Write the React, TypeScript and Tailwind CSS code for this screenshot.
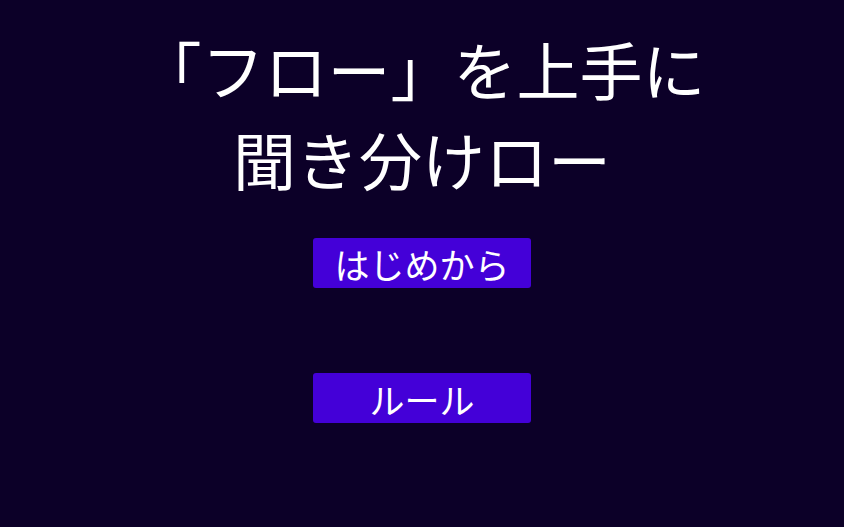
import React from 'react';

export default function App() {
    return (
        <div
            className="min-h-screen bg-[#0c0028] text-white flex flex-col items-center pt-[23px]"
            style={{ fontFamily: '"Noto Sans CJK JP", "Noto Sans", sans-serif' }}
        >
            {/* Title */}
            <h1 className="text-[63px] leading-[90px] font-normal text-center">
                「フロー」を上手に
                <br />
                聞き分けロー
            </h1>

            {/* Menu */}
            <div className="flex flex-col gap-[85px] mt-[35px]">
                {['はじめから', 'ルール'].map((label) => (
                    <button
                        key={label}
                        className="w-[218px] h-[50px] rounded-[3px] bg-[#4400d8] text-white text-[35px] leading-none"
                    >
                        {label}
                    </button>
                ))}
            </div>
        </div>
    );
}
